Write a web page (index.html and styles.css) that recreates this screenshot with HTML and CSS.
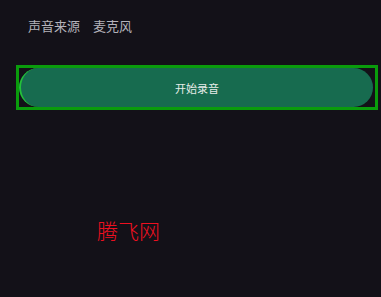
FILE: index.html
```html
<html>
  <head>
    <meta charset="utf-8">
    <title>record</title>
    <link rel="stylesheet" href="styles.css">
  </head>
  <body>
    <div class="source">
      <span class="label">声音来源</span>
      <span class="value">麦克风</span>
    </div>

    <div class="frame">
      <div class="btn">开始录音</div>
    </div>

    <div class="brand">腾飞网</div>
  </body>
</html>
```

FILE: styles.css
```css
body {
  margin: 0;
  background: #131118;
  font-family: "Noto Sans CJK SC", "Noto Sans", sans-serif;
  overflow: hidden;
}

.source {
  display: flex;
  gap: 13px;
  padding: 16px 0 0 28px;
  height: 20px;
  font-size: 13px;
  line-height: 20px;
  color: #b4b3ba;
}

.frame {
  margin: 29px 3px 0 16px;
  height: 39px;
  border: 3px solid #0a9c0c;
  display: flex;
}

.btn {
  flex: 1;
  margin-right: 2px;
  border-radius: 20px;
  border-left: 2px solid #23c13a;
  background: #176b4f;
  color: #e6ece8;
  font-size: 11px;
  display: flex;
  align-items: center;
  justify-content: center;
}

.brand {
  margin: 108px 0 0 97px;
  font-size: 21px;
  font-weight: 300;
  line-height: 24px;
  color: #ee1020;
}
```
